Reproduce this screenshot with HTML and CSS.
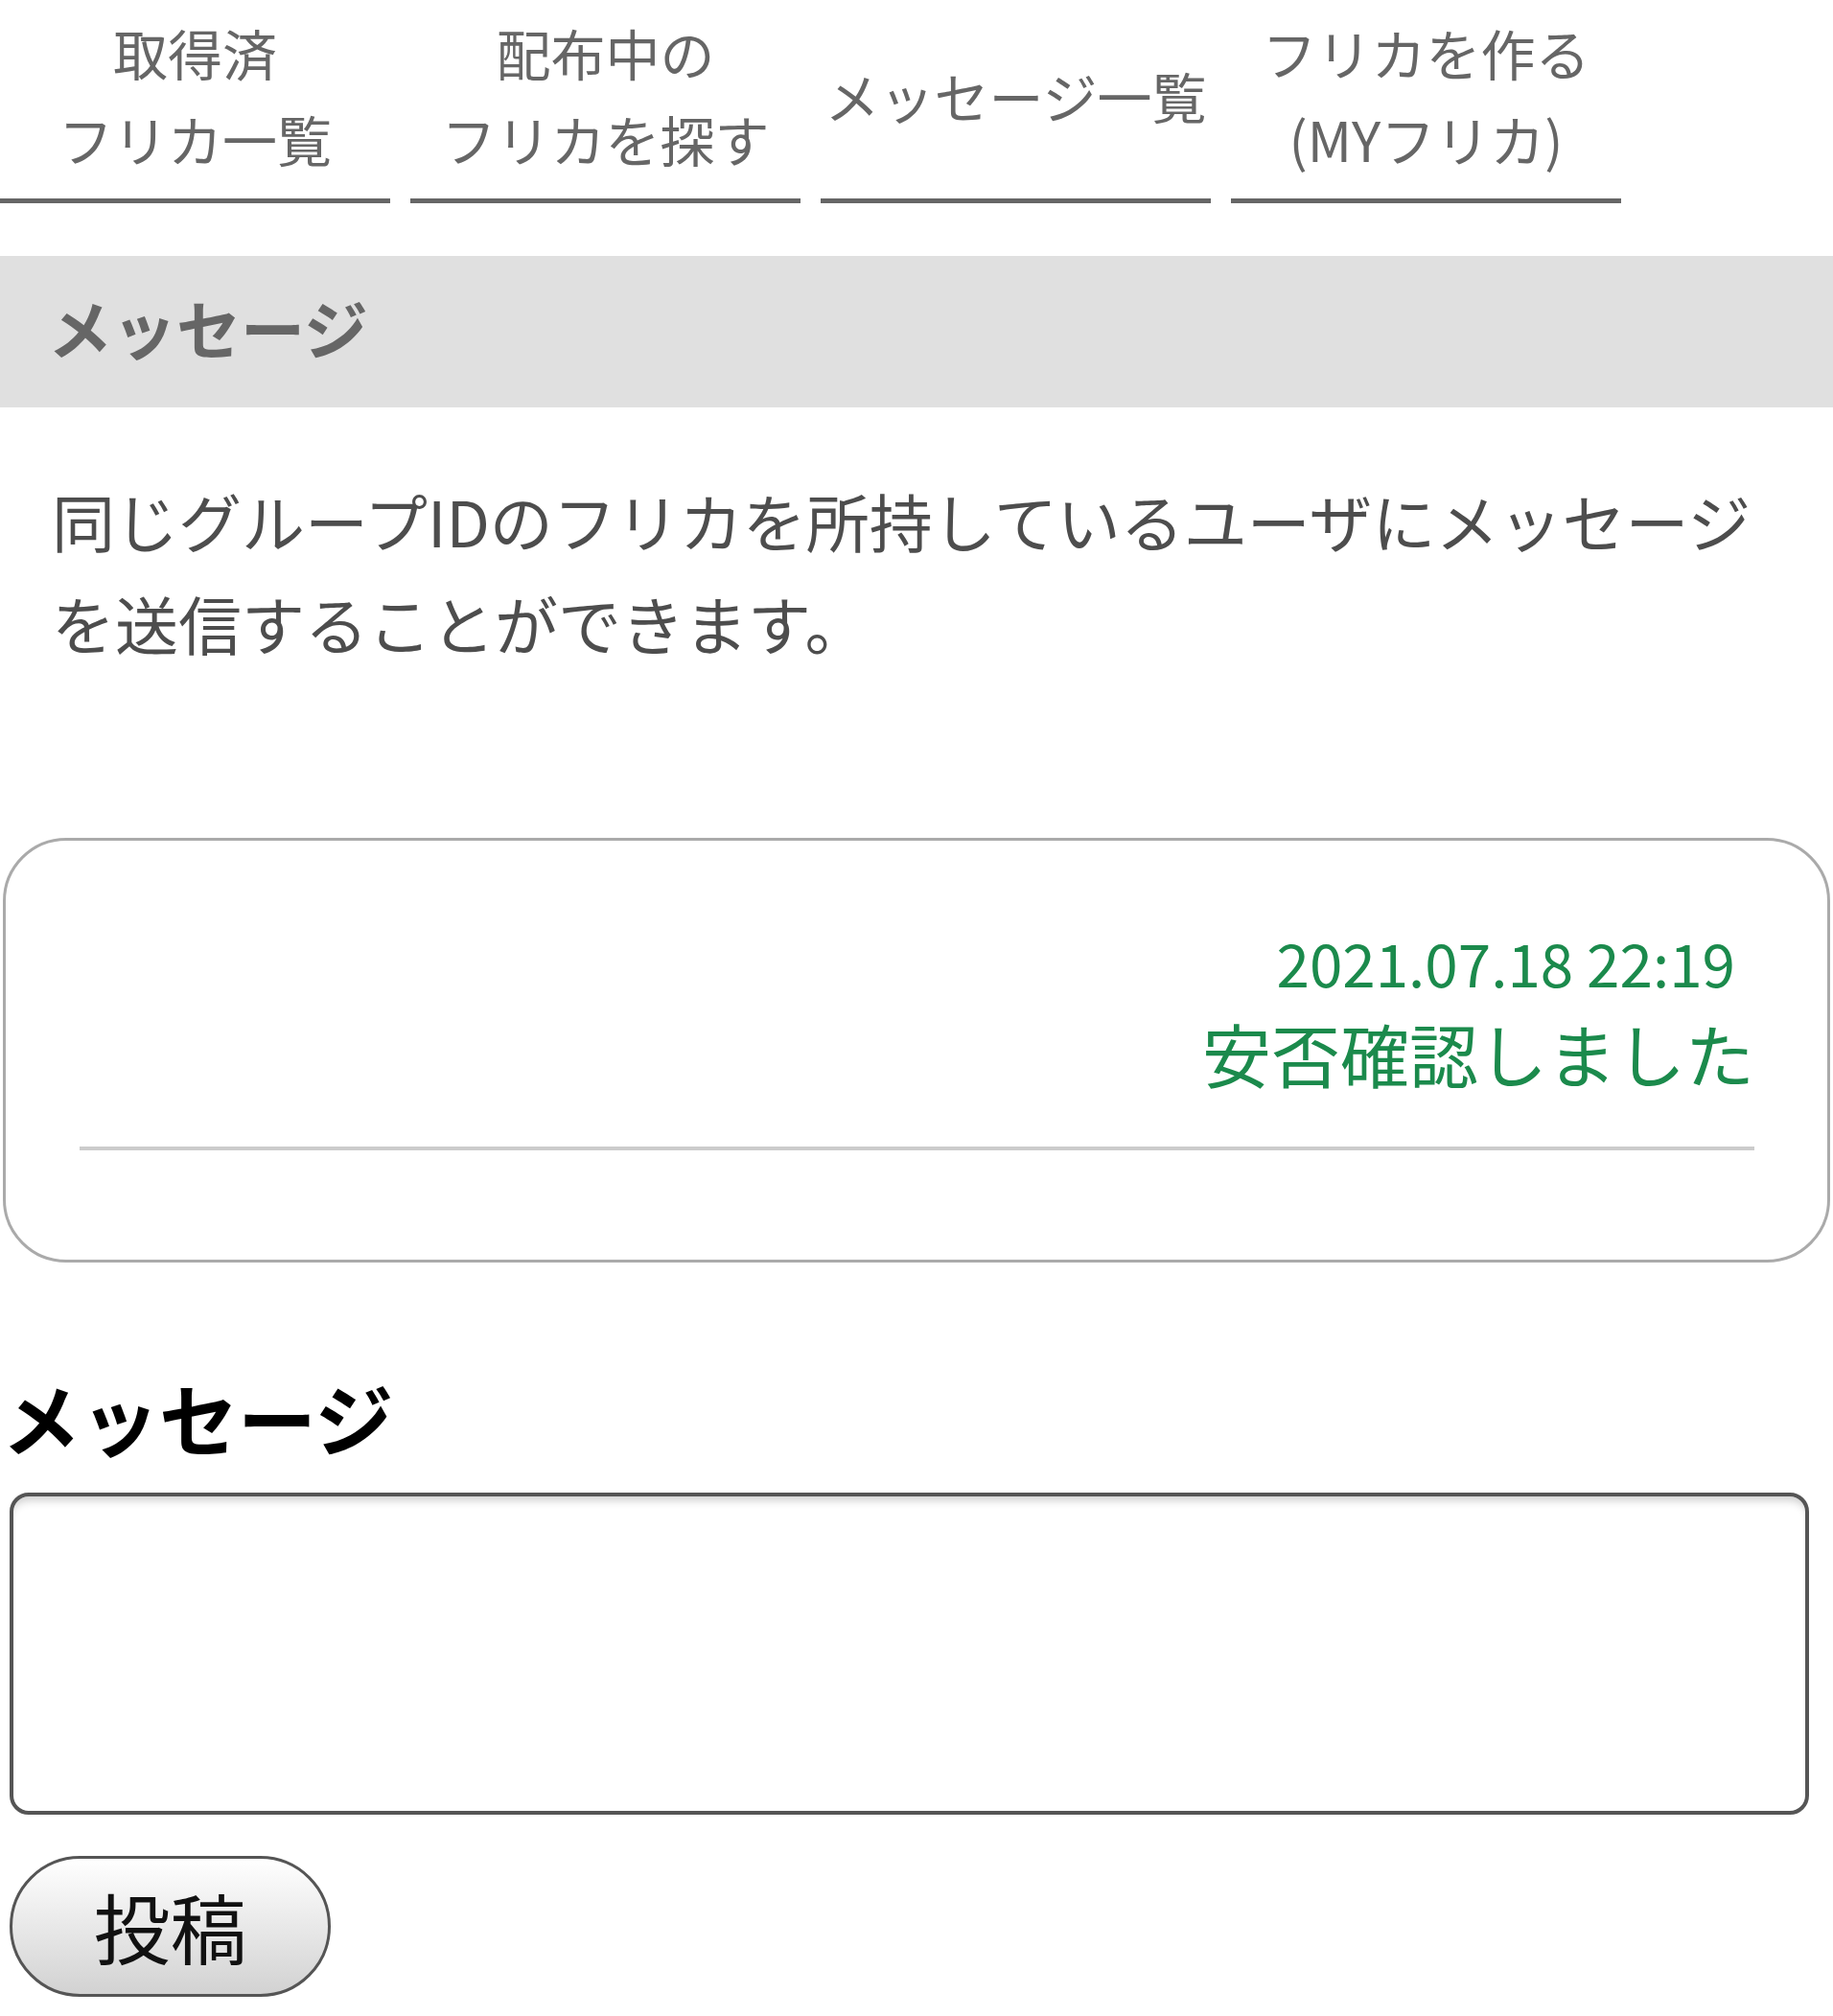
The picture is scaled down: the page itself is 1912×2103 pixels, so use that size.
FILE: index.html
```html
<!DOCTYPE HTML>
<html>
<head>
<meta http-equiv="Content-Type" content="text/html; charset=utf-8">
<title>メッセージ</title>
<link rel="stylesheet" href="styles.css">
</head>
<body>
<ul class="tabs">
  <li><a href="#">取得済<br>フリカ一覧</a></li>
  <li><a href="#">配布中の<br>フリカを探す</a></li>
  <li><a href="#">メッセージ一覧</a></li>
  <li><a href="#">フリカを作る<br>(MYフリカ)</a></li>
</ul>

<h2 class="sec_title">メッセージ</h2>
<p class="lead">同じグループIDのフリカを所持しているユーザにメッセージを送信することができます。</p>

<div class="msg_box">
  <div class="msg">
    <div class="msg_date">2021.07.18 22:19</div>
    <div class="msg_text">安否確認しました</div>
  </div>
  <hr class="msg_line">
</div>

<form class="post" action="#" onsubmit="return false;">
  <label class="post_label" for="post_body">メッセージ</label>
  <textarea id="post_body" class="post_body"></textarea>
  <button type="submit" class="post_btn">投稿</button>
</form>
</body>
</html>
```

FILE: styles.css
```css
body {margin:0; font-family:"Noto Sans CJK JP","Noto Sans",sans-serif; color:#333; background:#fff;}

.tabs {list-style:none; margin:0; padding:0; display:flex; gap:21px;}
.tabs li {flex:0 0 407px; display:flex; border-bottom:5px solid #666;}
.tabs a {flex:1; display:flex; align-items:center; justify-content:center; text-align:center; height:180px; padding:9px 0 18px; font-size:57px; line-height:90px; color:#666; text-decoration:none;}

.sec_title {margin:55px 0 0; height:158px; box-sizing:border-box; padding:0 50px 12px; display:flex; align-items:center; background:#e0e0e0; font-size:67px; font-weight:bold; color:#666;}

.lead {margin:64px 0 0; padding:0 54px; font-size:66px; line-height:107px; color:#4d4d4d;}

.msg_box {margin:171px 3px 0; border:3px solid #aaa; border-radius:66px; padding:86px 76px 114px 77px;}
.msg {text-align:right;}
.msg_date {font-size:62px; line-height:80px; color:#1b8a4c; margin-right:20px;}
.msg_text {font-size:72px; line-height:100px; margin-top:5px; color:#1b8a4c;}
.msg_line {margin:48px 0 0; border:0; height:4px; background:#ccc;}

.post {padding:0 25px 0 10px; margin-top:111px;}
.post_label {display:block; margin-left:-8px; font-size:82px; line-height:100px; font-weight:bold; color:#000;}
.post_body {display:block; box-sizing:border-box; width:100%; height:336px; margin-top:29px; border:4px solid #555; border-radius:20px; box-shadow:inset 0 10px 10px -6px rgba(0,0,0,0.2); resize:none; font-size:60px;}
.post_btn {display:block; margin-top:43px; width:335px; height:147px; border:3px solid #555; border-radius:74px; background:linear-gradient(#fff,#d2d2d2); font-family:"Noto Sans CJK JP",sans-serif; font-size:80px; line-height:1; color:#111; padding:0 0 4px; cursor:pointer;}
```
